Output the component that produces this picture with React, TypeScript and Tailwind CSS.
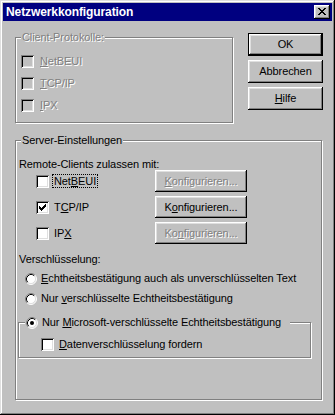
import React from 'react'

const raised =
  'shadow-[inset_-1px_-1px_#000,inset_1px_1px_#fff,inset_-2px_-2px_#808080,inset_2px_2px_#dfdfdf]'
const sunken =
  'shadow-[inset_1px_1px_#808080,inset_-1px_-1px_#fff,inset_2px_2px_#000,inset_-2px_-2px_#dfdfdf]'
const etched = 'border border-[#808080] shadow-[1px_1px_0_#fff,inset_1px_1px_0_#fff]'
const disabledText = 'text-[#808080] [text-shadow:1px_1px_0_#fff]'

function CheckBox({ checked = false, disabled = false }: { checked?: boolean; disabled?: boolean }) {
  const starts = [2, 3, 4, 3, 2, 1, 0]
  return (
    <div className={`w-[13px] h-[13px] shrink-0 ${sunken} ${disabled ? 'bg-[#c0c0c0]' : 'bg-white'}`}>
      {checked && (
        <svg width="13" height="13" viewBox="0 0 13 13" shapeRendering="crispEdges">
          {starts.map((s, i) => (
            <rect key={i} x={3 + i} y={3 + s} width="1" height="3" fill="#000" />
          ))}
        </svg>
      )}
    </div>
  )
}

function Radio({ selected = false }: { selected?: boolean }) {
  return (
    <svg width="12" height="12" viewBox="0 0 12 12" className="shrink-0">
      <circle cx="6" cy="6" r="5" fill="#fff" />
      <path d="M2.11 9.89 A5.5 5.5 0 0 1 9.89 2.11" stroke="#808080" fill="none" />
      <path d="M9.89 2.11 A5.5 5.5 0 0 1 2.11 9.89" stroke="#fff" fill="none" />
      <path d="M2.82 9.18 A4.5 4.5 0 0 1 9.18 2.82" stroke="#000" fill="none" />
      <path d="M9.18 2.82 A4.5 4.5 0 0 1 2.82 9.18" stroke="#dfdfdf" fill="none" />
      {selected && <circle cx="6" cy="6" r="2" fill="#000" />}
    </svg>
  )
}

function Button({
  children,
  className = '',
  disabled = false,
  isDefault = false,
}: {
  children: React.ReactNode
  className?: string
  disabled?: boolean
  isDefault?: boolean
}) {
  const face = (
    <div className={`w-full h-full flex items-center justify-center ${raised} ${disabled ? disabledText : ''}`}>
      {children}
    </div>
  )
  if (isDefault) {
    return <div className={`border border-black ${className}`}>{face}</div>
  }
  return <div className={className}>{face}</div>
}

function CloseX() {
  const rows = [
    [0, 1, 6, 7],
    [1, 2, 5, 6],
    [2, 3, 4, 5],
    [3, 4],
    [2, 3, 4, 5],
    [1, 2, 5, 6],
    [0, 1, 6, 7],
  ]
  return (
    <div className={`w-[16px] h-[14px] bg-[#c0c0c0] ${raised}`}>
      <svg width="16" height="14" viewBox="0 0 16 14" shapeRendering="crispEdges">
        {rows.map((cols, y) =>
          cols.map((x) => <rect key={`${y}-${x}`} x={4 + x} y={3 + y} width="1" height="1" fill="#000" />)
        )}
      </svg>
    </div>
  )
}

export default function App() {
  return (
    <div
      className={`w-[335px] h-[415px] bg-[#c0c0c0] p-[3px] flex flex-col text-[11px] leading-[13px] tracking-[-0.1px] text-black font-['Liberation_Sans',Arial,sans-serif] shadow-[inset_-1px_-1px_#000,inset_1px_1px_#dfdfdf,inset_-2px_-2px_#808080,inset_2px_2px_#fff]`}
    >
      {/* Title bar */}
      <div className="h-[18px] bg-[#000080] flex items-center pl-[3px] pr-[2px] shrink-0">
        <span className="text-white font-bold text-[12px] tracking-[-0.1px]">Netzwerkkonfiguration</span>
        <div className="ml-auto">
          <CloseX />
        </div>
      </div>

      {/* Client area */}
      <div className="flex flex-col pl-[12px]">
        <div className="flex items-start mt-[12px]">
          {/* Client-Protokolle */}
          <div className={`relative mt-[4px] w-[218px] h-[86px] ${etched}`}>
            <span className={`absolute left-[5px] -top-[7px] px-[1px] bg-[#c0c0c0] ${disabledText}`}>
              Client-Protokolle:
            </span>
            <div className="flex flex-col pt-[17px] pl-[5px] gap-[9px]">
              {[
                ['N', 'etBEUI'],
                ['T', 'CP/IP'],
                ['I', 'PX'],
              ].map(([u, rest]) => (
                <div key={rest} className="flex items-center h-[13px]">
                  <CheckBox disabled />
                  <span className={`ml-[6px] ${disabledText}`}>
                    <u>{u}</u>
                    {rest}
                  </span>
                </div>
              ))}
            </div>
          </div>

          {/* Buttons */}
          <div className="flex flex-col gap-[4px] ml-[15px]">
            <Button isDefault className="w-[75px] h-[23px]">
              OK
            </Button>
            <Button className="w-[75px] h-[23px]">Abbrechen</Button>
            <Button className="w-[75px] h-[23px]">
              <span>
                <u>H</u>ilfe
              </span>
            </Button>
          </div>
        </div>

        {/* Server-Einstellungen */}
        <div className={`relative mt-[17px] w-[307px] h-[260px] ${etched}`}>
          <span className="absolute left-[5px] -top-[7px] px-[1px] bg-[#c0c0c0]">Server-Einstellungen</span>

          <div className="flex flex-col">
            <div className="pt-[17px] pl-[3px] h-[29px] leading-[12px]">Remote-Clients zulassen mit:</div>

            <div className="flex flex-col gap-[4px]">
              <div className="flex items-center h-[22px] pl-[20px]">
                <div className="w-[119px] flex items-center">
                  <CheckBox />
                  <span className="ml-[3px] border border-dotted border-black px-[1px] leading-[12px]">
                    Net<u>B</u>EUI
                  </span>
                </div>
                <Button disabled className="w-[92px] h-[22px]">
                  <span>
                    <u>K</u>onfigurieren...
                  </span>
                </Button>
              </div>

              <div className="flex items-center h-[22px] pl-[20px]">
                <div className="w-[119px] flex items-center">
                  <CheckBox checked />
                  <span className="ml-[5px]">
                    T<u>C</u>P/IP
                  </span>
                </div>
                <Button className="w-[92px] h-[22px]">
                  <span>
                    K<u>o</u>nfigurieren...
                  </span>
                </Button>
              </div>

              <div className="flex items-center h-[22px] pl-[20px]">
                <div className="w-[119px] flex items-center">
                  <CheckBox />
                  <span className="ml-[5px]">
                    IP<u>X</u>
                  </span>
                </div>
                <Button disabled className="w-[92px] h-[22px]">
                  <span>
                    Ko<u>n</u>figurieren...
                  </span>
                </Button>
              </div>
            </div>

            <div className="mt-[9px] pl-[3px] h-[13px]">Verschlüsselung:</div>

            <div className="mt-[6px] pl-[9px] flex items-center h-[13px]">
              <Radio />
              <span className="ml-[4px]">
                <u>E</u>chtheitsbestätigung auch als unverschlüsselten Text
              </span>
            </div>

            <div className="mt-[7px] pl-[9px] flex items-center h-[13px]">
              <Radio />
              <span className="ml-[4px]">
                Nur <u>v</u>erschlüsselte Echtheitsbestätigung
              </span>
            </div>

            {/* Microsoft group */}
            <div className={`relative mt-[17px] ml-[2px] w-[293px] h-[36px] ${etched}`}>
              <div className="absolute left-[6px] -top-[7px] pl-[1px] pr-[9px] bg-[#c0c0c0] flex items-center h-[13px]">
                <Radio selected />
                <span className="ml-[4px]">
                  Nur <u>M</u>icrosoft-verschlüsselte Echtheitsbestätigung
                </span>
              </div>
              <div className="pt-[15px] pl-[22px] flex items-center">
                <CheckBox />
                <span className="ml-[5px]">
                  <u>D</u>atenverschlüsselung fordern
                </span>
              </div>
            </div>
          </div>
        </div>
      </div>
    </div>
  )
}
